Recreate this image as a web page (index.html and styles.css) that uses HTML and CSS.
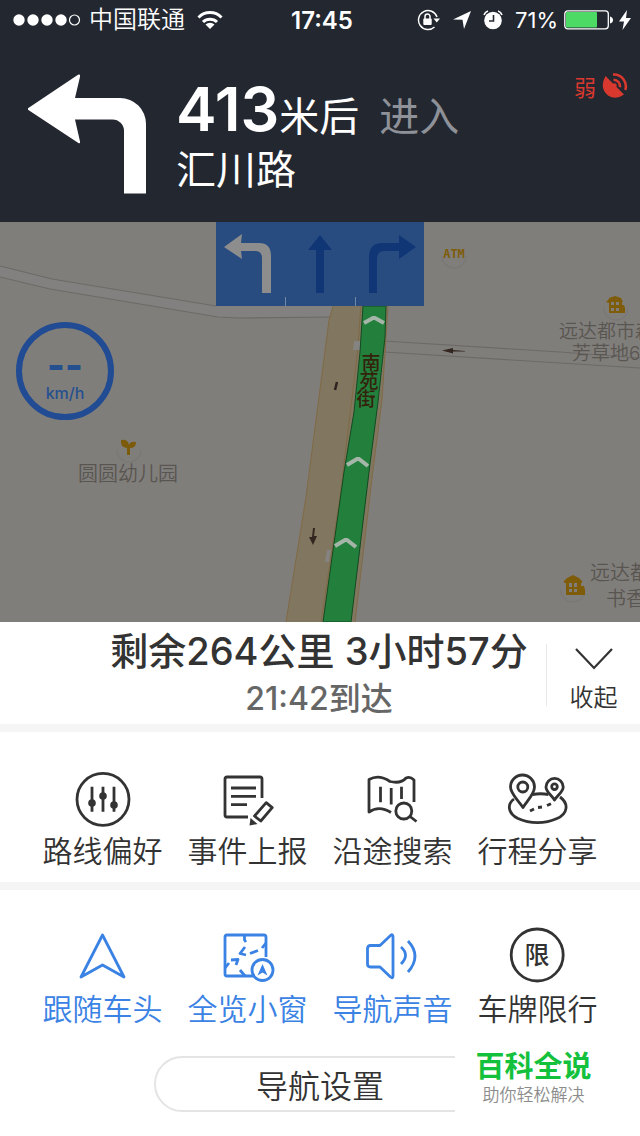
FILE: index.html
```html
<!DOCTYPE html>
<html lang="zh-CN">
<head>
    <meta charset="UTF-8">
    <meta name="viewport" content="width=device-width, initial-scale=1">
    <title>导航</title>
    <link rel="stylesheet" href="styles.css">
</head>
<body>

    <header class="top">
        <div class="status">
            <div class="status-left">
                <svg class="dots" width="68" height="14" viewBox="0 0 68 14">
                    <g fill="#fff">
                        <circle cx="6" cy="7" r="5.7"/><circle cx="20" cy="7" r="5.7"/><circle cx="34" cy="7" r="5.7"/><circle cx="48" cy="7" r="5.7"/>
                    </g>
                    <circle cx="61.500" cy="7" r="5" fill="none" stroke="#fff" stroke-width="1.200"/>
                </svg>
                <span class="carrier">中国联通</span>
                <svg width="26" height="20" viewBox="0 0 26 20" fill="none" stroke="#fff" stroke-width="3">
                    <path d="M1.500 7.500a16 16 0 0 1 23 0M6 12a10 10 0 0 1 14 0"/>
                    <path d="M13 19l-4.500-4.500a6.500 6.500 0 0 1 9 0z" fill="#fff" stroke="none"/>
                </svg>
            </div>
            <span class="clock">17:45</span>
            <div class="status-right">
                <svg width="23" height="22" viewBox="0 0 23 22">
                    <path d="M20 8A9.500 9.500 0 1 0 17.500 18" fill="none" stroke="#fff" stroke-width="1.400"/>
                    <path d="M16.500 9.500h6.500l-3.200 4z" fill="#fff"/>
                    <rect x="6.300" y="9.500" width="8.400" height="6.500" rx="1" fill="#fff"/>
                    <path d="M8 10V7.500a2.500 2.500 0 0 1 5 0V10" fill="none" stroke="#fff" stroke-width="1.500"/>
                </svg>
                <svg class="locate" width="18" height="18" viewBox="0 0 18 18"><path d="M0 8.500L18 0 11 18 9.500 8.800z" fill="#fff"/></svg>
                <svg class="alarm" width="20" height="20" viewBox="0 0 20 20">
                    <circle cx="10" cy="10.500" r="8.800" fill="#fff"/>
                    <path d="M1 5a6 6 0 0 1 4-4M15 1a6 6 0 0 1 4 4" fill="none" stroke="#fff" stroke-width="1.600"/>
                    <path d="M10.500 5v6H6" fill="none" stroke="#232730" stroke-width="1.600"/>
                </svg>
                <span class="percent">71%</span>
                <svg width="49" height="20" viewBox="0 0 49 20">
                    <rect x=".8" y=".8" width="43.500" height="18" rx="3" fill="none" stroke="#fff" stroke-width="1.300"/>
                    <rect x="2" y="2" width="31" height="15.600" rx="1" fill="#4cd964"/>
                    <path d="M46 6.500q3 1 3 3.500t-3 3.500z" fill="#fff"/>
                </svg>
                <svg class="bolt" width="12" height="20" viewBox="0 0 12 20"><path d="M8 0L0 11.500h5L3.500 20 12 8H7z" fill="#fff"/></svg>
            </div>
        </div>

        <div class="guide">
            <svg class="turn" width="120" height="120" viewBox="0 0 120 120" fill="#fff">
                <path d="M-1 35L50 .8q2.500-1.200 2 2L47 24h45a26 26 0 0 1 26 26v69.500H96V57a11.500 11.500 0 0 0-11.500-11.500H47l5 22q.5 2.800-2 1.300z"/>
            </svg>
            <div class="guide-text">
                <p class="distance"><strong>413</strong><span>米后</span><em>进入</em></p>
                <p class="road">汇川路</p>
            </div>
            <div class="gps">
                <span>弱</span>
                <svg width="26" height="26" viewBox="0 0 26 26">
                    <path d="M3.500 3L22 21.500Q14 27.500 6 22.500-3 15 3.500 3z" fill="#d9382f"/>
                    <g fill="none" stroke="#d9382f" stroke-width="2.600">
                        <path d="M11 1.500A12 12 0 0 1 23.300 17"/>
                        <path d="M11.500 6.800a6.500 6.500 0 0 1 6.500 7.400"/>
                    </g>
                    <circle cx="12.500" cy="12.500" r="2.200" fill="#d9382f"/>
                </svg>
            </div>
        </div>
    </header>

    <main class="map">
        <svg class="map-canvas" width="640" height="400" viewBox="0 0 640 400">
            <!-- side roads -->
            <path d="M0 44L52 57 216 84H334V95L238 96 218 95 50 67 0 55z" fill="#83817f"/>
            <path d="M0 44L52 57 216 84M0 55L50 67 218 95 238 96 332 95M384 119L560 130 640 136M384 130L640 146" fill="none" stroke="#6c6a67" stroke-width="1.200"/>
            <!-- main road -->
            <path d="M333 84H388L382 178 373 248 355 400H286L306 275 329 98z" fill="#81765f"/>
            <path d="M333 84L329 98 306 275 286 400M361 84L357 135 340 275 321 400M388 84L382 178 373 248 355 400" fill="none" stroke="#806a45"/>
            <path d="M354 119h6v9h-7zM327 328h4l-2 12h-4z" fill="#858381"/>
            <path d="M363 84L360 130 354 190 344 250 323 400H351L369 250 378 180 385 115 386 84z" fill="#23803c" stroke="#134a22"/>
            <g fill="none" stroke="#a5b5a7" stroke-width="4">
                <path d="M364 101l9-5h2l9 5M347 243l10-6h2l9 7M335 324l10-6h2l9 7"/>
            </g>
            <path d="M337 160l-2 8" stroke="#2e211f" stroke-width="2.500"/>
            <path d="M315 306l-1 8h3l-4 9-4-8h3l1-9zM465 129l-12-1v-2l-11 2.500 11 3v-2h12z" fill="#33251f"/>
            <g class="street">
                <text x="371" y="148">南</text>
                <text x="369" y="166">苑</text>
                <text x="366" y="184">街</text>
            </g>

            <!-- places -->
            <g fill="none" stroke="#7a7977" stroke-width="1.500">
                <path d="M117 228a12 12 0 0 0 24 0M442 34a12 12 0 0 0 24 0M604 86a12 12 0 0 0 24 0M561 368a12 12 0 0 0 24 0"/>
            </g>
            <path d="M121 218q7-1 8 5 1-4 7-3 0 6-6 6v7h-3v-7q-7-1-6-8z" fill="#7c5b0b"/>
            <text class="atm" x="454" y="36">ATM</text>
            <g fill="#7e5c0a" fill-rule="evenodd">
                <path d="M606 80l3-3v-1l6-2 6 2 2 4h-1v3h2l1 3v5h-16V81zM611 80v3h3v-3zM616 80v3h3v-3zM611 86v3h3v-3zM616 86v3h3v-3z"/>
                <path d="M564 359l3-3 6-3 6 3 3 3v2h-1v3h3l1 4v5h-19v-12h-2zM569 361v4h3v-4zM574 361v4h3v-4zM569 367v3h3v-3zM574 367v3h3v-3z"/>
            </g>
            <g class="place">
                <text x="78" y="259">圆圆幼儿园</text>
                <text class="small" x="559" y="116">远达都市森</text>
                <text class="small" x="572" y="138">芳草地6</text>
                <text x="590" y="358">远达都</text>
                <text x="606" y="384">书香</text>
            </g>
        </svg>

        <div class="lanes">
            <svg width="208" height="84" viewBox="0 0 208 84">
                <path d="M8 25L26 12l-1 9h18q12 0 12 13v37h-9V36q0-7-7-7H25l1 8z" fill="#8d8d8d"/>
                <g fill="#113676">
                    <path d="M104 13l12 15h-8v43h-8V28h-8z"/>
                    <path d="M153 71V35q0-14 14-14h16v-8l17 12-17 12v-8h-14q-8 0-8 8v34z"/>
                </g>
            </svg>
        </div>

        <div class="speed">
            <span class="speed-value">--</span>
            <span class="speed-unit">km/h</span>
        </div>
    </main>

    <section class="panel">
        <div class="summary">
            <div class="eta">
                <p class="remain">剩余264公里 3小时57分</p>
                <p class="arrive">21:42到达</p>
            </div>
            <button type="button" class="collapse">
                <svg width="38" height="22" viewBox="0 0 38 22" fill="none" stroke="#333" stroke-width="2.200"><path d="M1 1l18 19L37 1"/></svg>
                收起
            </button>
        </div>

        <div class="tools">
            <button type="button" class="tool">
                <svg viewBox="0 0 56 56">
                    <circle cx="28" cy="28.300" r="26"/>
                    <path d="M17 15.700v25M28 15.700v25M39 15.700v25"/>
                    <g class="fill"><circle cx="17" cy="32" r="3.800"/><circle cx="28" cy="25" r="3.800"/><circle cx="39" cy="34" r="3.800"/></g>
                </svg>
                路线偏好
            </button>
            <button type="button" class="tool">
                <svg viewBox="0 0 56 56">
                    <path d="M42 27V8q0-2-2-2H7q-2 0-2 2v36q0 2 2 2h21"/>
                    <path d="M11 17h25M11 25.300h25M11 33.700h16"/>
                    <path d="M46.200 31.700l6 5L40.800 50 34.500 45z"/>
                    <path class="fill" d="M30.500 47l7 6-8 1.500z"/>
                </svg>
                事件上报
            </button>
            <button type="button" class="tool">
                <svg viewBox="0 0 56 56">
                    <path d="M26 41.500Q14 34 4 41V8.500Q14 3 25 10.500 36 13 41 7q4-2 8 2v22"/>
                    <path d="M15.500 15.700v15.500M26.200 17v16.500M36.500 15.700V28"/>
                    <circle cx="38.800" cy="40" r="8"/>
                    <path d="M45 45.500l6.500 5"/>
                </svg>
                沿途搜索
            </button>
            <button type="button" class="tool">
                <svg viewBox="0 0 56 56">
                    <path d="M13 36.500C9 30 .5 23 .5 16a12 12 0 0 1 24 0c0 7-7.500 14-11.500 20.500z"/>
                    <circle cx="12.800" cy="16" r="5"/>
                    <path d="M44.500 29c-3-5-8.500-8-8.500-13a8.600 8.600 0 0 1 17.200 0C53.200 21 47.500 24 44.500 29z"/>
                    <circle cx="44.500" cy="15.700" r="2.800"/>
                    <path d="M4 28C-4 34-1 43 8 47.500c12 5.500 27 5.500 39 0 11-5 12-15 3-21.500M22.500 23.500q8-1.500 16 0"/>
                    <path d="M20 40l4-2M28 36.500l4-.5M37 34.500l4-1.800"/>
                </svg>
                行程分享
            </button>
        </div>

        <div class="tools">
            <button type="button" class="tool on">
                <svg viewBox="0 0 56 56"><path d="M27.500 6L49 48 27.500 36 6 48z"/></svg>
                跟随车头
            </button>
            <button type="button" class="tool on">
                <svg viewBox="0 0 56 56">
                    <path d="M46 28V8q0-2-2-2H7q-2 0-2 2v37q0 2 2 2h26"/>
                    <path d="M24.500 6v5l1.500 2M46 14l-4 5M38 21.500l-8 3M25 18l-5 6.500 6 1.500M11 31l7-.5-2 5.500M5 39l4-5M20 41l5 6"/>
                    <circle cx="42.500" cy="41" r="10.500"/>
                    <path class="fill" stroke="none" d="M42.500 35l5 11.500-5-3-5 3z"/>
                </svg>
                全览小窗
            </button>
            <button type="button" class="tool on">
                <svg viewBox="0 0 56 56">
                    <path d="M25.500 6.500L15 16.500H5.500q-3 0-3 3V35q0 3 3 3H15L25.500 48q2.500 2 2.500-1V8q0-3.500-2.500-1.500z"/>
                    <path d="M36 18q9 8 0 17M43 12q14 15 0 31"/>
                </svg>
                导航声音
            </button>
            <button type="button" class="tool">
                <svg viewBox="0 0 56 56">
                    <circle cx="27.200" cy="26" r="26"/>
                    <text class="limit" x="27" y="35">限</text>
                </svg>
                车牌限行
            </button>
        </div>

        <footer class="bottom">
            <button type="button" class="settings">导航设置</button>
            <div class="brand">
                <b>百科全说</b>
                <small>助你轻松解决</small>
            </div>
        </footer>
    </section>

</body>
</html>
```

FILE: styles.css
```css
* {
    box-sizing: border-box;
}
body {
    margin: 0;
    background: #fff;
    color: #333;
    font-family: Inter, "Noto Sans CJK SC", sans-serif;
}
p {
    margin: 0;
}
svg {
    display: block;
    flex: none;
}
button {
    padding: 0;
    border: none;
    background: none;
    color: inherit;
    font: inherit;
    cursor: pointer;
}

/* header */
.top {
    background: #232730;
    color: #fff;
    height: 222px;
}
.status {
    display: grid;
    grid-template-columns: 1fr auto 1fr;
    align-items: center;
    height: 40px;
    padding: 0 9px 0 13px;
}
.status-left, .status-right {
    display: flex;
    align-items: center;
}
.status-right {
    justify-content: flex-end;
}
.carrier {
    margin: 0 12px 0 8px;
    font-size: 24px;
    font-weight: 350;
    line-height: 40px;
}
.clock {
    font-size: 24px;
    font-weight: 600;
}
.locate {
    margin-left: 13px;
}
.alarm {
    margin: 0 12px;
}
.percent {
    margin-right: 6px;
    font-size: 22px;
}
.bolt {
    margin-left: 6px;
}
.guide {
    display: flex;
    padding: 34px 12px 0 28px;
}
.guide-text {
    flex: 1;
    margin-left: 28px;
}
.distance {
    line-height: 70px;
    font-size: 40px;
    font-weight: 400;
}
.distance strong {
    font-size: 61px;
    font-weight: 600;
}
.distance em {
    margin-left: 20px;
    color: #8e9198;
    font-style: normal;
}
.road {
    font-size: 40px;
    font-weight: 400;
    line-height: 36px;
}
.gps {
    display: flex;
    align-items: center;
    gap: 6px;
    height: 24px;
    color: #d9382f;
    font-size: 22px;
}

/* map */
.map {
    position: relative;
    height: 400px;
    overflow: hidden;
    background: #807e7b;
}
.map-canvas {
    margin: 0 auto;
}
.street text {
    fill: #34220c;
    font-size: 19px;
    font-weight: 500;
    text-anchor: middle;
}
.place text {
    fill: #595550;
    font-size: 20px;
    font-weight: 350;
}
.place .small {
    font-size: 19px;
}
.place .atm, .atm {
    fill: #7e5c0a;
    font-family: "DejaVu Sans Mono", monospace;
    font-size: 12px;
    font-weight: 700;
    text-anchor: middle;
}
.lanes {
    position: absolute;
    top: 0;
    left: 50%;
    width: 208px;
    margin-left: -104px;
    background: #284b80;
}
.lanes::before, .lanes::after {
    content: "";
    position: absolute;
    bottom: 0;
    left: 69px;
    width: 1px;
    height: 9px;
    background: #7187a8;
}
.lanes::after {
    left: 139px;
}
.speed {
    position: absolute;
    top: 100px;
    left: 16px;
    display: flex;
    flex-direction: column;
    align-items: center;
    width: 98px;
    height: 98px;
    padding-top: 19px;
    border: 6px solid #214b92;
    border-radius: 50%;
    color: #25508f;
}
.speed-value {
    font-size: 38px;
    font-weight: 800;
    line-height: 36px;
}
.speed-unit {
    font-size: 16px;
    font-weight: 500;
    line-height: 20px;
}

/* bottom panel */
.summary {
    display: flex;
    align-items: center;
    height: 102px;
}
.eta {
    flex: 1;
    padding: 4px 0 0 92px;
    text-align: center;
    font-weight: 500;
}
.remain {
    font-size: 38px;
    line-height: 48px;
}
.arrive {
    color: #666;
    font-size: 32px;
    line-height: 48px;
}
.collapse {
    display: flex;
    flex-direction: column;
    align-items: center;
    gap: 12px;
    width: 94px;
    height: 62px;
    margin-top: 4px;
    padding-top: 4px;
    border-left: 1px solid #e8e8e8;
    font-size: 24px;
    font-weight: 350;
    line-height: 32px;
}
.tools {
    display: grid;
    grid-template-columns: repeat(4, 1fr);
    padding: 39px 30px 11px;
    border-top: 8px solid #f5f5f5;
}
.tool {
    display: flex;
    flex-direction: column;
    align-items: center;
    gap: 4px;
    font-size: 30px;
    font-weight: 350;
    line-height: 40px;
}
.tool svg {
    width: 56px;
    height: 56px;
    overflow: visible;
    fill: none;
    stroke: currentColor;
    stroke-width: 2.8px;
    stroke-linejoin: round;
}
.tool .fill {
    fill: currentColor;
    stroke: none;
}
.tool .limit {
    fill: currentColor;
    stroke: none;
    font-size: 25px;
    font-weight: 500;
    text-anchor: middle;
}
.on {
    color: #3a82e4;
}
.bottom {
    position: relative;
    display: flex;
    justify-content: center;
    padding: 16px 0 24px;
}
.settings {
    width: 52%;
    height: 56px;
    border: 2px solid #e4e4e4;
    border-radius: 28px;
    font-size: 32px;
    font-weight: 350;
}
.brand {
    position: absolute;
    right: 24px;
    top: 2px;
    width: 161px;
    height: 74px;
    padding: 8px 4px 0 0;
    background: #fff;
    text-align: center;
}
.brand b {
    display: block;
    color: #14c13c;
    font-size: 29px;
    font-weight: 700;
    line-height: 34px;
}
.brand small {
    display: block;
    color: #8c8c8c;
    font-size: 17px;
    font-weight: 350;
    line-height: 22px;
}
```
